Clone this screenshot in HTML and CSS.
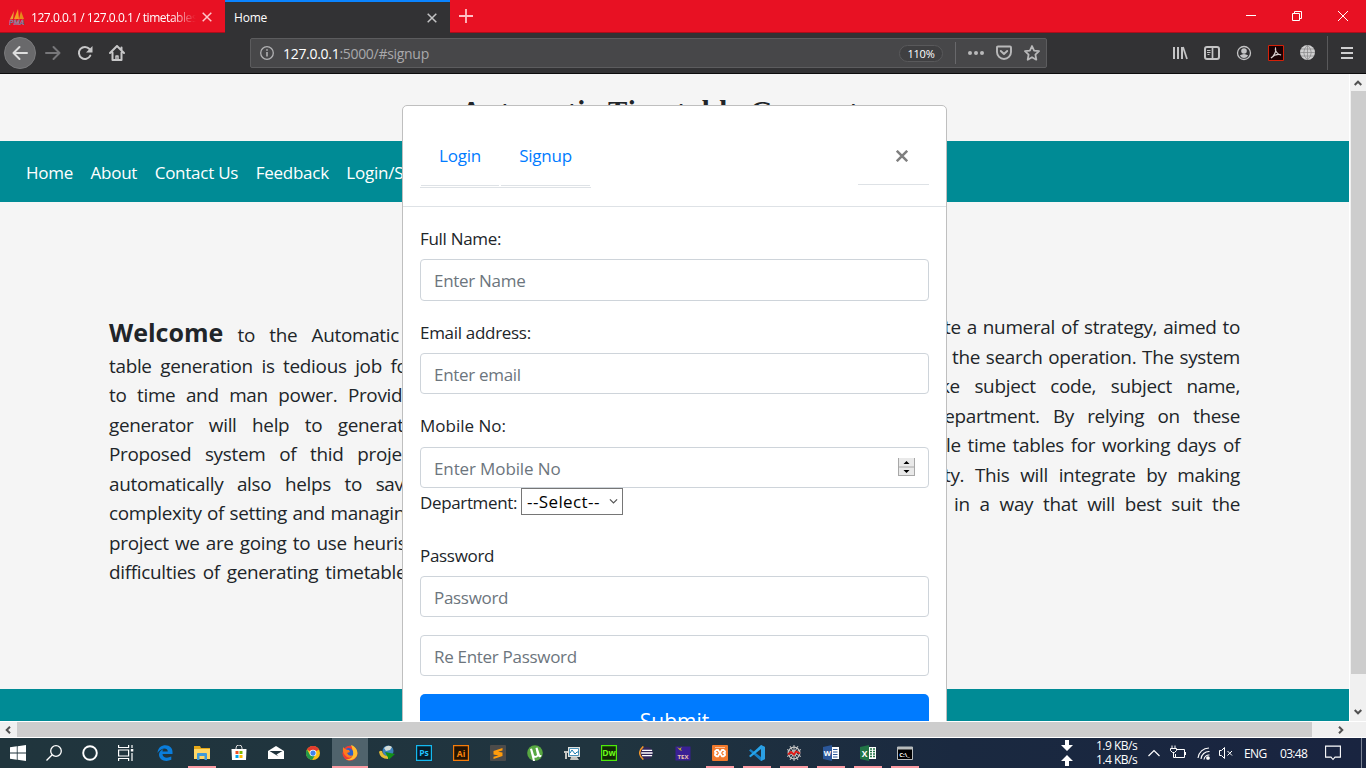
FILE: index.html
```html
<!DOCTYPE html>
<html lang="en">
<head>
<meta charset="utf-8">
<title>Home</title>
<link rel="stylesheet" href="styles.css">
</head>
<body>
<div class="tabs">
  <div class="tab tab-one">
    <svg class="i16" viewBox="0 0 16 16"><path d="M1 10 5 2l-1 8z" fill="#e8a33a"/><path d="M5 10 9 0l1 10z" fill="#f59b22"/><path d="M10 10 12 2l3 8z" fill="#e58a1c"/><text class="pma" x="0" y="16">PMA</text></svg>
    <span class="tab-title fade">127.0.0.1 / 127.0.0.1 / timetables</span>
    <svg class="cross" viewBox="0 0 10 10"><path d="m.7.7 8.6 8.6M9.3.7.7 9.3" stroke="#ffc5ca" stroke-width="1.5"/></svg>
  </div>
  <div class="tab tab-home"><span class="tab-title">Home</span><svg class="cross" viewBox="0 0 10 10"><path d="m.7.7 8.6 8.6M9.3.7.7 9.3" stroke="#c4c4c5" stroke-width="1.5"/></svg></div>
  <svg class="plus" viewBox="0 0 14 14"><path d="M7 0v14M0 7h14" stroke="#ffc0c5" stroke-width="1.8"/></svg>
  <div class="winctl">
    <svg viewBox="0 0 10 10"><path d="M0 4.500h10" stroke="#fff"/></svg>
    <svg viewBox="0 0 10 10" fill="none" stroke="#fff"><path d="M.5 2.500h7v7h-7zM2.500 2.500v-2h7v7h-2"/></svg>
    <svg viewBox="0 0 10 10"><path d="m0 0 10 10M10 0 0 10" stroke="#fff"/></svg>
  </div>
</div>
<div class="toolbar">
  <div class="back"><svg class="i16" viewBox="0 0 16 16" fill="none" stroke="#dedede" stroke-width="2" stroke-linecap="round" stroke-linejoin="round"><path d="M15 8H1.500M7.500 2l-6 6 6 6"/></svg></div>
  <svg class="i16 fwd" viewBox="0 0 16 16" fill="none" stroke="#77777a" stroke-width="2" stroke-linecap="round" stroke-linejoin="round"><path d="M1 8h13.500M8.500 2l6 6-6 6"/></svg>
  <svg class="i16 reload" viewBox="0 0 16 16"><path d="M13.300 10.600A6 6 0 1 1 12.500 4" fill="none" stroke="#c7c7c8" stroke-width="2" stroke-linecap="round"/><path d="M15.500 1v6.500H9z" fill="#c7c7c8"/></svg>
  <svg class="i16 home" viewBox="0 0 16 16" fill="none" stroke="#c7c7c8" stroke-width="2" stroke-linecap="round" stroke-linejoin="round"><path d="m1 8 7-7 7 7M3.500 7.500V15h9V7.500M12.500 5V2.500"/><path d="M7 15v-4h2v4" stroke-width="1.500"/></svg>
  <div class="url">
    <svg class="i14" viewBox="0 0 14 14"><circle cx="7" cy="7" r="6.300" fill="none" stroke="#b1b1b3" stroke-width="1.300"/><path d="M7 6v4.500M7 3.200v1.600" stroke="#b1b1b3" stroke-width="1.600"/></svg>
    <span class="addr">127.0.0.1<span class="dim">:5000/#signup</span></span>
    <span class="zoomlvl">110%</span>
    <span class="vsep"></span>
    <svg class="i16 dots" viewBox="0 0 16 16" fill="#b9b9ba"><circle cx="2" cy="8" r="2"/><circle cx="8" cy="8" r="2"/><circle cx="14" cy="8" r="2"/></svg>
    <svg class="i16 pocket" viewBox="0 0 16 16" fill="none" stroke="#b9b9ba" stroke-width="1.900" stroke-linecap="round" stroke-linejoin="round"><path d="M2 1.500h12q1 0 1 1V7A7 7 0 0 1 1 7V2.500q0-1 1-1z"/><path d="m4.800 6 3.200 3 3.200-3"/></svg>
    <svg class="i16" viewBox="0 0 16 16"><path d="m8 1 2.100 4.600 4.900.6-3.600 3.400.9 5.100L8 12.200l-4.300 2.500.9-5.100L1 6.200l4.900-.6z" fill="none" stroke="#b9b9ba" stroke-width="1.800" stroke-linejoin="round"/></svg>
  </div>
  <div class="tools">
    <svg class="i16" viewBox="0 0 16 16" fill="none" stroke="#c4c4c5" stroke-width="2"><path d="M2 2v12M6 2v12M10 2v12" /><path d="m11 2 4 12" stroke-width="1.700"/></svg>
    <svg class="i16" viewBox="0 0 16 16" fill="none" stroke="#c4c4c5"><rect x="1" y="2" width="14" height="12" rx="2" stroke-width="2"/><path d="M8.500 2v12" stroke-width="1.700"/><path d="M3 5.500h3.500M3 7.500h3.500M3.500 9.500h2"/></svg>
    <svg class="i16" viewBox="0 0 16 16"><circle cx="8" cy="8" r="6.500" fill="none" stroke="#c4c4c5" stroke-width="1.300"/><circle cx="8" cy="6" r="2.800" fill="#c4c4c5"/><path d="M3.800 10.500Q8 7.500 12.200 10.500 10.500 13 8 13t-4.200-2.500" fill="#c4c4c5"/></svg>
    <svg class="i16" viewBox="0 0 16 16"><path d="M.5.500h15v15H.5z" fill="#1b0205" stroke="#d42008"/><path d="M3 13C6 11 8.500 6 7.500 3.200 6.500 5 9.500 10 13 9.800 10 8.800 6 10 3 13" fill="none" stroke="#d8d0d0" stroke-width="1.200"/></svg>
    <svg class="i16" viewBox="0 0 16 16"><circle cx="7.500" cy="7.500" r="7.500" fill="#cfcfd0"/><path d="M7.500 0v15M0 7.500h15M1 4h13M1 11h13M7.500 0Q0 7.500 7.500 15M7.500 0q7.500 7.500 0 15" fill="none" stroke="#858587" stroke-width=".7"/></svg>
  </div>
  <span class="tsep"></span>
  <svg class="menu" viewBox="0 0 12 12"><path d="M0 1h12M0 6h12M0 11h12" stroke="#cfcfd0" stroke-width="2"/></svg>
</div>

<div class="viewport">
  <div class="page">
    <header class="head"><h1>Automatic Timetable Generator</h1></header>
    <nav class="nav"><a>Home</a><a>About</a><a>Contact Us</a><a>Feedback</a><a>Login/Signup</a></nav>
    <main class="main">
      <div class="left">
        <p class="line l1"><b>Welcome</b> to the Automatic</p>
        <p class="line l2">table generation is tedious job for</p>
        <p class="line l3">to time and man power. Providing</p>
        <p class="line l4">generator will help to generate</p>
        <p class="line l5">Proposed system of thid project</p>
        <p class="line l6">automatically also helps to save</p>
        <p class="line l7">complexity of setting and managing</p>
        <p class="line l8">project we are going to use heuristic</p>
        <p class="line l9">difficulties of generating timetables</p>
      </div>
      <div class="right">
        <p class="line r1">te a numeral of strategy, aimed to</p>
        <p class="line r2">the search operation. The system</p>
        <p class="line r3">like subject code, subject name,</p>
        <p class="line r4">department. By relying on these</p>
        <p class="line r5">le time tables for working days of</p>
        <p class="line r6">ty. This will integrate by making</p>
        <p class="line r7">in a way that will best suit the</p>
      </div>
    </main>
    <footer class="foot"></footer>
    <section class="modal">
      <div class="modal-head">
        <div class="mtabs"><a class="mtab login">Login</a><a class="mtab signup">Signup</a></div>
        <div class="close"><svg viewBox="0 0 12 12"><path d="m.8.8 10.400 10.400M11.200.8.8 11.200" stroke="#7f7f7f" stroke-width="2.500"/></svg></div>
      </div>
      <div class="modal-body">
        <label>Full Name:</label><div class="field">Enter Name</div>
        <label>Email address:</label><div class="field">Enter email</div>
        <label class="mobile">Mobile No:</label><div class="field tight">Enter Mobile No
          <svg class="spin" viewBox="0 0 17 18"><path d="M0 0h17v18H0z" fill="#e9e9e9"/><path d="M0 9h17M.5 0v18M0 17.500h17M16.500 0v18" stroke="#a8a8a8"/><path d="m5.500 6 3-3 3 3zM5.500 12l3 3 3-3z" fill="#000"/></svg>
        </div>
        <div class="dept"><span>Department:</span><span class="select">--Select--<svg viewBox="0 0 8 5"><path d="m.4.4 3.600 3.600L7.600.4" fill="none" stroke="#555" stroke-width="1.200"/></svg></span></div>
        <label>Password</label><div class="field">Password</div>
        <div class="field">Re Enter Password</div>
        <div class="submit">Submit</div>
      </div>
    </section>
  </div>
  <div class="vbar"><svg viewBox="0 0 8 6"><path d="m.7 5 3.300-3.300L7.300 5" fill="none" stroke="#505050" stroke-width="2"/></svg><div class="vthumb"></div><svg viewBox="0 0 8 6"><path d="m.7 1 3.300 3.300L7.300 1" fill="none" stroke="#505050" stroke-width="2"/></svg></div>
</div>
<div class="hbar"><svg viewBox="0 0 6 8"><path d="M5 .7 1.700 4 5 7.300" fill="none" stroke="#505050" stroke-width="2"/></svg><div class="hthumb"></div><svg class="hr" viewBox="0 0 6 8"><path d="M1 .7 4.300 4 1 7.300" fill="none" stroke="#505050" stroke-width="2"/></svg></div>

<div class="taskbar">
  <div class="sys">
    <span><svg class="i16" viewBox="0 0 16 16" fill="#fff"><path d="M0 2.300 6.800 1.300v6.200H0zM7.600 1.200 16 0v7.500H7.600zM0 8.400h6.800v6.300L0 13.800zM7.600 8.400H16V16l-8.400-1.200z"/></svg></span>
    <span><svg class="i16" viewBox="0 0 16 16" fill="none" stroke="#fff" stroke-width="1.300"><circle cx="10" cy="6" r="5.300"/><path d="M6.200 9.800.5 15.500"/></svg></span>
    <span><svg class="i16" viewBox="0 0 16 16"><circle cx="8" cy="8" r="6.800" fill="none" stroke="#fff" stroke-width="1.900"/></svg></span>
    <span><svg class="i16" viewBox="0 0 16 16" fill="none" stroke="#fff" stroke-width="1.200"><path d="M.6 0v2.500h10V0M.6 16v-2.500h10V16M.6 5h10v6H.6zM14 0v3M14 8v8"/><path d="M12.800 4h2.500v2.500h-2.500z" fill="#fff" stroke="none"/></svg></span>
  </div>
  <div class="apps">
    <span><svg class="i16" viewBox="0 0 16 16"><path d="M.5 8C1 2.500 4.500.3 8.500.3c4.500 0 7 3 7 6.700v2H5.500c.2 4 5 4.500 8.800 2.500v3.300C8.500 17.500 2 15 2 9.500 2 7 4 5 6.500 4 5.700 4.800 5.500 6 5.500 6.500h5.300c0-4.500-7-4-10.300 1.500z" fill="#0a7ddb"/></svg></span>
    <span class="on"><svg class="i16" viewBox="0 0 16 16"><path d="M0 1h6l1 2h9v11H0z" fill="#e6a817"/><path d="M0 4h16v10H0z" fill="#ffd766"/><path d="M3 9q0-1 1-1h8q1 0 1 1v6h-2.500v-4h-5v4H3z" fill="#3f9ad8"/></svg></span>
    <span><svg class="i16" viewBox="0 0 16 16"><path d="M5 5V3a3 3 0 0 1 6 0v2" fill="none" stroke="#ddd"/><path d="M.5 4h15l-.5 11H1z" fill="#fff"/><path d="M4.500 6h3v3h-3z" fill="#f25022"/><path d="M8.500 6h3v3h-3z" fill="#7fba00"/><path d="M4.500 10h3v3h-3z" fill="#00a4ef"/><path d="M8.500 10h3v3h-3z" fill="#ffb900"/></svg></span>
    <span><svg class="i16" viewBox="0 0 16 16"><path d="M0 6 8 1l8 5v8H0z" fill="#fff"/><path d="M1.500 6h13L8.500 9.500l2 2z" fill="#20343d"/></svg></span>
    <span><svg class="i14" viewBox="0 0 16 16"><circle cx="8" cy="8" r="8" fill="#fbc116"/><path d="M8 8 1 4a8 8 0 0 1 14 0z" fill="#e33b2e"/><path d="M1.100 4A8 8 0 0 0 7 16l4-6.500-6.500.5z" fill="#229a49"/><circle cx="8" cy="8" r="3.800" fill="#fff"/><circle cx="8" cy="8" r="3" fill="#4083ee"/></svg></span>
    <span class="on active"><svg class="i16" viewBox="0 0 16 16"><circle cx="8" cy="8.300" r="7.500" fill="#f03c35"/><path d="M9 0c6 2 8 8 5 12-3 4-8 4-10 2 6 1 9-4 5-14z" fill="#ffbd2e"/><path d="M4 4q4-3 7 2 1 6-3 6-5 0-4-8z" fill="#2b60c8"/><path d="M1 2q2 3 6 3l1 2-3 1q2 4 6 2-2 4-6 2-5-3-4-10z" fill="#ff7a1e"/></svg></span>
    <span><svg class="i16" viewBox="0 0 16 16"><circle cx="9" cy="6" r="5.500" fill="#3d82ba"/><path d="M5 3q4-4 8-1l-2 3-4 1z" fill="#d5ddd8"/><path d="M0 7q1-2 3-1 1 5 6 5v3Q1 14 0 7z" fill="#e5bd36"/><path d="m6 7 10 2-6 5.500z" fill="#129018"/></svg></span>
    <span><svg class="i16" viewBox="0 0 16 16"><path d="M.6.600h14.800v14.800H.6z" fill="#071c28" stroke="#14b9f0" stroke-width="1.200"/><text x="8" y="11" class="ic" fill="#21c3ff">Ps</text></svg></span>
    <span><svg class="i16" viewBox="0 0 16 16"><path d="M.6.600h14.800v14.800H.6z" fill="#241302" stroke="#f57c0a" stroke-width="1.200"/><text x="8" y="11.500" class="ic" fill="#ff880e">Ai</text></svg></span>
    <span><svg class="i16" viewBox="0 0 16 16"><rect width="16" height="16" rx="1" fill="#4c4b4a"/><path d="m12.500 3-9 3v3.500l5 1-5 1.200V14l9-3V7.500L8 6.700l4.500-1.200z" fill="#ff9b0b"/></svg></span>
    <span><svg class="i16" viewBox="0 0 16 16"><circle cx="8" cy="8" r="7.800" fill="#58a842"/><path d="m3 4 2-.5 2 6.500q1 2 3 0L8.500 3l2-.5L13 10l1.500 0-.5 2-2 .2-.7-1q-2 2-4 1.500L8 16H6z" fill="#fff"/></svg></span>
    <span><svg class="i16" viewBox="0 0 16 16"><path d="M4 2h12v10H4z" fill="#e0e1dd"/><path d="M5.500 3.500h9v7h-9z" fill="#fff" stroke="#4c93ba"/><path d="m6 8 2-3 3 4 2-2h2" fill="none" stroke="#187bad"/><path d="M0 6h4v2H3v6H1V8H0zM7 12h6l2 3H6z" fill="#c5c6c2"/></svg></span>
    <span><svg class="i16" viewBox="0 0 16 16"><path d="M.6.600h14.800v14.800H.6z" fill="#112b06" stroke="#4ee90a" stroke-width="1.200"/><text x="8" y="11" class="ic" fill="#6cfa1b">Dw</text></svg></span>
    <span><svg class="i14" viewBox="0 0 16 16"><circle cx="8.500" cy="8" r="7.200" fill="#312657"/><path d="M5 .5Q-3.500 8 5 15.500" fill="none" stroke="#f5982b" stroke-width="1.700"/><path d="M3.500 5h11.500M2.500 8h13M3.500 11h11.500" stroke="#fff" stroke-width="1.500"/></svg></span>
    <span><svg class="i16" viewBox="0 0 16 16"><path d="M.5 1.500h15v14H.5z" fill="#3a1f94"/><path d="m2 2 2.500 1.500L7 2 5.800 4 7 6 4.500 5z" fill="#b9b42f"/><text x="8" y="13.500" class="ic sm" fill="#ecc6b0">TEX</text></svg></span>
    <span class="on"><svg class="i16" viewBox="0 0 16 16"><rect width="16" height="16" rx="1" fill="#f2792b"/><path d="M8 8 6 5H4.500L3 6.300v.8l1.300.9L3 9v1l1.500 1.300H6zl2 3.300h1.500L13 10V9l-1.300-1L13 7.100v-.8L11.500 5H10z" fill="none" stroke="#fff" stroke-width="1.800"/><path d="M3 2.500h10" stroke="#ffd0b0" stroke-width=".8"/></svg></span>
    <span class="on"><svg class="i16" viewBox="0 0 16 16"><path d="m12 0 4 2v12l-4 2L0 5.500 1.500 4 12 12z" fill="#1680c7"/><path d="m12 0v4L1.500 12.300 0 11z" fill="#27a4eb"/><path d="m12 0 4 2v12l-4 2z" fill="#2b9fe3"/></svg></span>
    <span class="on"><svg class="i16" viewBox="0 0 16 16" fill="none" stroke="#c4c4c4"><circle cx="8" cy="8" r="5.800" stroke-width="1.300"/><circle cx="8" cy="8" r="2.500"/><path d="M8 0v16M1 4.500l14 7M1 11.500l14-7M4 1l8 14M12 1 4 15"/><path d="m2 9.500 3-2.500 3 2.500 2-3 4 2" stroke="#e01c18" stroke-width="1.900"/></svg></span>
    <span class="on"><svg class="i16" viewBox="0 0 16 16"><path d="M9 2h7v12H9z" fill="#fff"/><path d="M10 4.500h4.500M10 7h4.500M10 9.500h4.500M10 12h4.500" stroke="#2b579a"/><path d="m0 2 9-2v16l-9-2z" fill="#2b579a"/><text x="4.500" y="11" class="ic w" fill="#fff">W</text></svg></span>
    <span class="on"><svg class="i16" viewBox="0 0 16 16"><path d="M9 2h7v12H9z" fill="#fff"/><path d="M10 4h2M13 4h2M10 6.500h2M13 6.500h2M10 9h2M13 9h2M10 11.500h2M13 11.500h2" stroke="#217346" stroke-width="1.400"/><path d="m0 2 9-2v16l-9-2z" fill="#217346"/><text x="4.500" y="11.500" class="ic" fill="#fff">X</text></svg></span>
    <span class="on"><svg class="i16" viewBox="0 0 16 16"><path d="M.5 2h15v12.500H.5z" fill="#000" stroke="#b8bcbd"/><path d="M0 2h16v2.500H0z" fill="#b8bcbd"/><text x="7.500" y="11.500" class="ic sm" fill="#fff">C:\_</text></svg></span>
  </div>
  <div class="tray">
    <svg class="arrows" viewBox="0 0 12 28" fill="#fff"><path d="M4 1h4v5h4l-6 6-6-6h4zM4 27h4v-5h4l-6-6-6 6h4z"/></svg>
    <span class="net">1.9 KB/s<br>1.4 KB/s</span>
    <svg class="chev" viewBox="0 0 12 8"><path d="m.5 7 5.500-5.500L11.500 7" fill="none" stroke="#fff" stroke-width="1.200"/></svg>
    <svg class="i16 batt" viewBox="0 0 16 16" fill="none" stroke="#fff"><path d="M7 4.500h7.500v8h-9V9M2 .5v3M5 .5v3M.5 3.500h6v2l-2 2h-2l-2-2zM3.500 8v4.500h2M15.500 7v3"/></svg>
    <svg class="i14 wifi" viewBox="0 0 14 14" fill="none" stroke="#fff" stroke-width="1.100"><path d="M1 12A11 11 0 0 1 12 2M4 13a8 8 0 0 1 8.500-7.500M7 13.500A5 5 0 0 1 12.500 9"/><circle cx="11" cy="12" r="1.300" fill="#fff"/></svg>
    <svg class="i14 vol" viewBox="0 0 14 14" fill="none" stroke="#fff"><path d="M.5 4.500h2l3-3v11l-3-3h-2zM8.500 5l4.500 4.500M13 5 8.500 9.500"/></svg>
    <span class="lang">ENG</span><span class="clock">03:48</span>
    <svg class="i16 note" viewBox="0 0 16 16"><path d="M.6 1.100h14.800v11H10L8 14.500l-2-2.400H.6z" fill="none" stroke="#fff" stroke-width="1.100"/></svg>
  </div>
</div>
</body>
</html>
```
FILE: styles.css
```css
* { box-sizing: border-box; }
body { margin: 0; width: 1366px; height: 768px; overflow: hidden; display: flex; flex-direction: column; font-family: "Open Sans", "Noto Sans", sans-serif; }
svg { display: block; flex: none; }
p, h1 { margin: 0; }
.i16 { width: 16px; height: 16px; }
.i14 { width: 14px; height: 14px; }

.tabs { height: 33px; flex: none; background: #e81123; border-bottom: 1px solid #a90d1b; display: flex; }
.tab { display: flex; align-items: center; height: 33px; color: #fff; font-size: 12px; white-space: nowrap; padding-top: 2px; }
.tab-one { width: 225px; padding-left: 9px; gap: 6px; padding-right: 13px; height: 32px; }
.tab-one .tab-title { width: 165px; overflow: hidden; letter-spacing: -.45px; }
.fade { -webkit-mask-image: linear-gradient(90deg, #000 85%, transparent); mask-image: linear-gradient(90deg, #000 85%, transparent); }
.pma { font: italic bold 7px "Liberation Sans", sans-serif; fill: #3c3f78; stroke: #c6b5bf; stroke-width: .3px; }
.tab-home { width: 225px; background: #323234; border-top: 2px solid #0a84ff; padding: 0 13px 0 9px; justify-content: space-between; }
.tab-home .tab-title { letter-spacing: -.2px; }
.cross { width: 10px; height: 10px; }
.plus { width: 14px; height: 14px; margin: 9px 0 0 9px; }
.winctl { margin-left: auto; display: flex; gap: 36px; padding: 11px 18px 0 0; }
.winctl svg { width: 10px; height: 10px; }

.toolbar { height: 41px; flex: none; background: #323234; border-bottom: 1px solid #0c0c0d; display: flex; align-items: center; padding-left: 4px; }
.back { width: 32px; height: 32px; border-radius: 50%; background: #69696b; border: 1px solid #7a7a7c; display: flex; align-items: center; justify-content: center; }
.fwd { margin-left: 9px; }
.reload, .home { margin-left: 16px; }
.url { width: 797px; height: 30px; margin-left: 125px; background: #474749; border: 1px solid #5c5c5e; border-radius: 2px; display: flex; align-items: center; padding: 0 6px 0 9px; }
.addr { color: #fff; font-size: 14px; margin-left: 9px; letter-spacing: -.3px; }
.dim { color: #a9a9ab; }
.zoomlvl { margin-left: auto; width: 44px; height: 17px; border-radius: 9px; border: 1px solid #59595b; background: #3f3f41; color: #fff; font-size: 11px; letter-spacing: -.2px; line-height: 15px; text-align: center; }
.vsep { width: 1px; height: 22px; background: #68686b; margin: 0 12px; }
.pocket { margin: 0 12px; }
.tools { display: flex; gap: 16px; margin-left: 125px; }
.tsep { width: 1px; height: 34px; background: #59595b; margin: 0 13px 0 11px; }
.menu { width: 12px; height: 12px; }

.viewport { height: 647px; flex: none; display: flex; background: #f5f5f5; }
.page { width: 1349px; height: 647px; position: relative; overflow: hidden; display: flex; flex-direction: column; color: #212529; font-size: 17px; }
.head { height: 67px; flex: none; }
h1 { font: bold 29px/36px "Liberation Serif", serif; text-align: center; padding-top: 19px; letter-spacing: 1px; }
.nav { height: 61px; flex: none; background: #008b95; color: #fff; display: flex; align-items: center; gap: 17.500px; padding: 2px 0 0 26px; }
.nav a { letter-spacing: -.25px; }
.main { flex: 1; display: flex; justify-content: space-between; padding: 111px 109px 0; }
.left { width: 320px; padding-top: 2px; }
.right { width: 320px; display: flex; flex-direction: column; align-items: flex-end; }
.line { white-space: nowrap; text-align: justify; text-align-last: justify; font-size: 18.900px; line-height: 29.500px; height: 29.500px; letter-spacing: -.3px; }
.line b { font-size: 25px; letter-spacing: 0; }
.l1 { width: 290px; height: 36.700px; line-height: 35px; }
.l2 { width: 306px; }
.l3 { width: 319px; }
.l4 { width: 305px; }
.l5 { width: 308px; }
.l6 { width: 305px; }
.l7 { width: 306px; }
.l8 { width: 317px; }
.l9 { width: 306px; }
.r1 { width: 296px; }
.r2 { width: 288px; }
.r3 { width: 309px; }
.r4 { width: 307px; }
.r5 { width: 294px; }
.r6 { width: 296px; }
.r7 { width: 286px; }
.foot { height: 32px; flex: none; background: #008b95; }

.modal { position: absolute; left: 402px; top: 31px; width: 545px; height: 700px; background: #fff; border: 1px solid #bfbfbf; border-radius: 5px; }
.modal-head { height: 101px; border-bottom: 1px solid #dee2e6; padding: 17px 17px 0; display: flex; justify-content: space-between; align-items: flex-start; }
.mtabs { display: flex; gap: 2px; padding: 0 1px; border-bottom: 1px solid #dee2e6; height: 65px; color: #007bff; }
.mtab { height: 63px; border-bottom: 1px solid #dee2e6; text-align: center; line-height: 66px; letter-spacing: -.25px; }
.login { width: 78px; }
.signup { width: 89px; }
.close { width: 71px; height: 62px; border-bottom: 1px solid #dee2e6; display: flex; justify-content: center; padding: 27px 0 0 17px; }
.close svg { width: 12px; height: 12px; }
.modal-body { padding: 17.400px 17px 0; }
label { display: block; height: 26.400px; line-height: 29.400px; margin-bottom: 8.300px; letter-spacing: -.3px; }
.mobile { height: 26.900px; line-height: 28px; letter-spacing: 0; }
.field { height: 41.500px; border: 1px solid #ced4da; border-radius: 4px; padding: 2px 13px 0; margin-bottom: 17.500px; color: #6c757d; display: flex; align-items: center; justify-content: space-between; letter-spacing: -.3px; }
.tight { margin-bottom: 0; letter-spacing: -.12px; }
.spin { width: 17px; height: 18px; margin-top: -4px; }
.dept { height: 52.400px; display: flex; gap: 4px; line-height: 29px; letter-spacing: -.36px; }
.select { width: 102px; height: 27px; line-height: 29px; border: 1px solid #767676; color: #000; display: flex; align-items: center; justify-content: space-between; padding: 0 4px 0 5px; letter-spacing: .4px; }
.select svg { width: 9px; height: 5px; }
.submit { height: 51px; background: #007bff; color: #fff; border-radius: 5px; text-align: center; font-size: 21px; line-height: 54px; }

.vbar { width: 17px; height: 647px; background: #f0f0f0; display: flex; flex-direction: column; align-items: center; padding: 6px 0; border-left: 1px solid #fff; }
.vbar svg { width: 8px; height: 6px; }
.vthumb { width: 15px; height: 584px; margin: 5px 0 35px; background: #cdcdcd; }
.hbar { height: 17px; flex: none; background: #f0f0f0; border-top: 1px solid #fff; border-bottom: 1px solid #fff; display: flex; align-items: center; padding-left: 5px; }
.hbar svg { width: 6px; height: 8px; }
.hthumb { width: 1295px; height: 15px; margin-left: 6px; background: #cdcdcd; }
.hr { margin-left: 26px; }

.taskbar { height: 30px; flex: none; background: linear-gradient(90deg, #20353d, #20343f 45%, #1a2940 70%, #192440); display: flex; color: #fff; }
.sys { display: flex; }
.sys span { width: 36px; height: 30px; display: flex; align-items: center; justify-content: center; }
.apps { display: flex; margin-left: 2px; }
.apps span { width: 37px; height: 30px; display: flex; align-items: center; justify-content: center; position: relative; }
.on::after { content: ""; position: absolute; left: 5px; bottom: 0; width: 28px; height: 2px; background: #fb9ba3; }
.apps .active { background: linear-gradient(#50636c, #50636c) 1px 0 / 36px 30px no-repeat; }
.active::after { left: 1px; width: 36px; }
.ic { font: bold 8.500px "Open Sans", sans-serif; text-anchor: middle; }
.ic.sm { font-size: 6px; }
.ic.w { font-size: 7.500px; }
.tray { flex: 1; display: flex; align-items: center; font-size: 12px; border-right: 1px solid #7b8394; margin-right: 4px; padding-left: 138px; }
.arrows { width: 12px; height: 28px; }
.net { line-height: 14px; width: 43px; margin-left: 23px; letter-spacing: -.5px; white-space: nowrap; }
.chev { width: 12px; height: 8px; margin-left: 9px; }
.batt { margin-left: 10px; }
.wifi { margin-left: 11px; }
.vol { margin-left: 8px; }
.lang { margin-left: 11px; width: 23px; letter-spacing: -.6px; }
.clock { margin-left: 13px; width: 28px; letter-spacing: -.7px; }
.note { margin-left: 17px; }
```
